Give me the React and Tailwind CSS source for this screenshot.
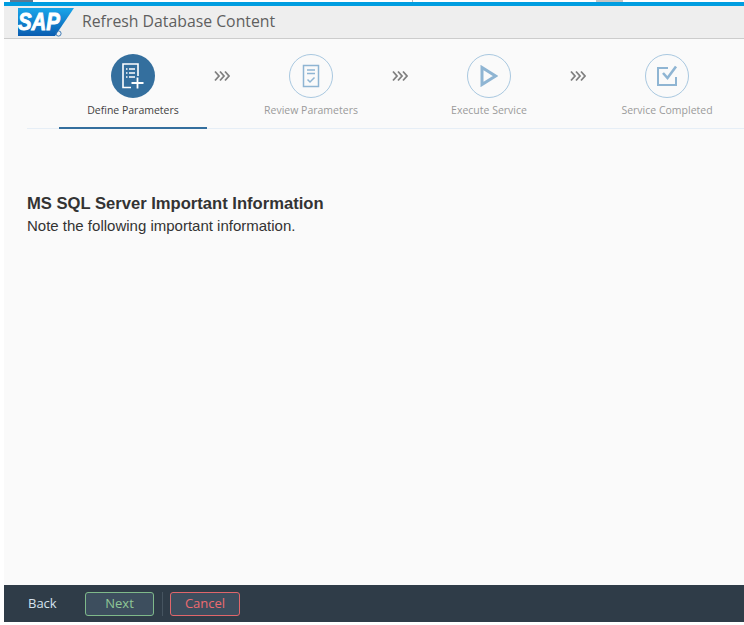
import { Fragment } from 'react'

const steps = [
  { label: 'Define Parameters', icon: 'define', active: true },
  { label: 'Review Parameters', icon: 'review' },
  { label: 'Execute Service', icon: 'execute' },
  { label: 'Service Completed', icon: 'completed' }
]

function SapLogo() {
  return (
    <svg width="58" height="32" viewBox="0 0 58 32" className="shrink-0">
      <defs>
        <linearGradient id="sapBlue" x1="0" y1="0" x2="0" y2="1">
          <stop offset="0" stopColor="#19a6ea" />
          <stop offset="1" stopColor="#0a5cb0" />
        </linearGradient>
      </defs>
      <polygon points="0,2 56,2 37,30 0,30" fill="url(#sapBlue)" />
      <text x="0" y="24" fontFamily="Liberation Sans, sans-serif" fontSize="24" fontWeight="700" fontStyle="italic" fill="#fff" stroke="#fff" strokeWidth="0.9" textLength="42" lengthAdjust="spacingAndGlyphs">SAP</text>
      <circle cx="40.5" cy="27.5" r="2.6" fill="none" stroke="#2b6fb0" strokeWidth="0.9" />
    </svg>
  )
}

function StepIcon({ name, color }) {
  if (name === 'define') {
    return (
      <svg width="22" height="26" viewBox="0 0 22 26" fill="none" stroke={color} strokeWidth="1.6">
        <path d="M9 24.5H1V1H16V13" />
        <path d="M4 6h1.5M7 6h6M4 10h1.5M7 10h6M4 14h1.5M7 14h6" />
        <path d="M9.5 20H21.5M15.5 14.5V25.5" strokeWidth="1.8" />
      </svg>
    )
  }
  if (name === 'review') {
    return (
      <svg width="18" height="24" viewBox="0 0 18 24" fill="none" stroke={color} strokeWidth="1.5">
        <rect x="1.5" y="1.5" width="15" height="21" />
        <path d="M5 6h8M5 9.5h8" />
        <path d="M5.5 15.5l2.5 2.5 4.5-4.5" />
      </svg>
    )
  }
  if (name === 'execute') {
    return (
      <svg width="18" height="22" viewBox="0 0 18 22" fill="none" stroke={color} strokeWidth="3">
        <path d="M2 2.5V19.5L15.5 11Z" />
      </svg>
    )
  }
  return (
    <svg width="22" height="22" viewBox="0 0 22 22" fill="none" stroke={color} strokeWidth="2">
      <path d="M12 3H2V20H20V12" />
      <path d="M7 8l4.5 5L20 1.5" strokeWidth="2.6" />
    </svg>
  )
}

function Chevrons() {
  return (
    <svg width="16" height="12" viewBox="0 0 16 12" fill="none" stroke="#808080" strokeWidth="1.8">
      <path d="M1 1.5L5 6L1 10.5M6 1.5L10 6L6 10.5M11 1.5L15 6L11 10.5" />
    </svg>
  )
}

export default function App() {
  return (
    <div className="w-[744px] h-[625px] bg-white pl-1 pb-[3px] overflow-hidden flex flex-col font-['Open_Sans',sans-serif]">
      {/* Browser leftovers above the blue bar */}
      <div className="h-[2px] flex shrink-0">
        <div className="ml-[6px] w-[23px] bg-[#5a7a96]" />
        <div className="ml-[379px] w-px bg-[#bbbbbb]" />
        <div className="ml-[183px] w-[27px] bg-[#c4c4c4]" />
      </div>
      <div className="h-1 bg-[#009de0] shrink-0" />

      {/* Header */}
      <div className="h-[33px] shrink-0 bg-[#eeeeee] border-b border-[#cccccc] flex items-center pl-[14px] gap-[6px]">
        <SapLogo />
        <span className="text-[15.8px] text-[#5f5f5f] leading-none pb-px">Refresh Database Content</span>
      </div>

      {/* Content */}
      <div className="flex-1 bg-[#fafafa] flex flex-col overflow-hidden">
        <div className="ml-[23px] mt-[15px] border-b border-[#e6eef6] h-[75px] flex pl-[32px] shrink-0">
          {steps.map((step, i) => (
            <Fragment key={step.label}>
              {i > 0 && (
                <div className="w-[30px] shrink-0 flex justify-center pt-4">
                  <Chevrons />
                </div>
              )}
              <div className={`w-[148px] h-[75px] shrink-0 flex flex-col items-center ${step.active ? 'border-b-2 border-[#346f9e]' : ''}`}>
                <div className={`w-11 h-11 rounded-full flex items-center justify-center ${step.active ? 'bg-[#346f9e]' : 'border border-[#a9c8e0] bg-[#fafafa]'}`}>
                  <StepIcon name={step.icon} color={step.active ? '#ffffff' : '#8fb5d3'} />
                </div>
                <span className={`mt-[6px] text-[10.5px] leading-[12px] whitespace-nowrap ${step.active ? 'text-[#3f3f3f]' : 'text-[#9a9a9a]'}`}>
                  {step.label}
                </span>
              </div>
            </Fragment>
          ))}
        </div>

        <div className="ml-[23px] mt-[65px] font-['Liberation_Sans',sans-serif]">
          <h1 className="text-[16.6px] leading-5 font-bold text-[#333333]">MS SQL Server Important Information</h1>
          <p className="mt-[2px] text-[15px] leading-5 text-[#333333]">Note the following important information.</p>
        </div>
      </div>

      {/* Footer */}
      <div className="h-[37px] shrink-0 bg-[#2f3c48] flex items-center pl-[25px] text-[13px]">
        <span className="text-[#d5e2ee] w-[56px] ml-[-1px] mr-[1px]">Back</span>
        <button className="w-[69px] h-[24px] rounded-[3px] border border-[#7fb98a] bg-[#3d4e5e] text-[#8fc797]">Next</button>
        <div className="w-px h-[24px] bg-[#465460] ml-2 mr-[7px]" />
        <button className="w-[70px] h-[24px] rounded-[3px] border border-[#e0666b] bg-[#3d4e5e] text-[#ee6b70]">Cancel</button>
      </div>
    </div>
  )
}
